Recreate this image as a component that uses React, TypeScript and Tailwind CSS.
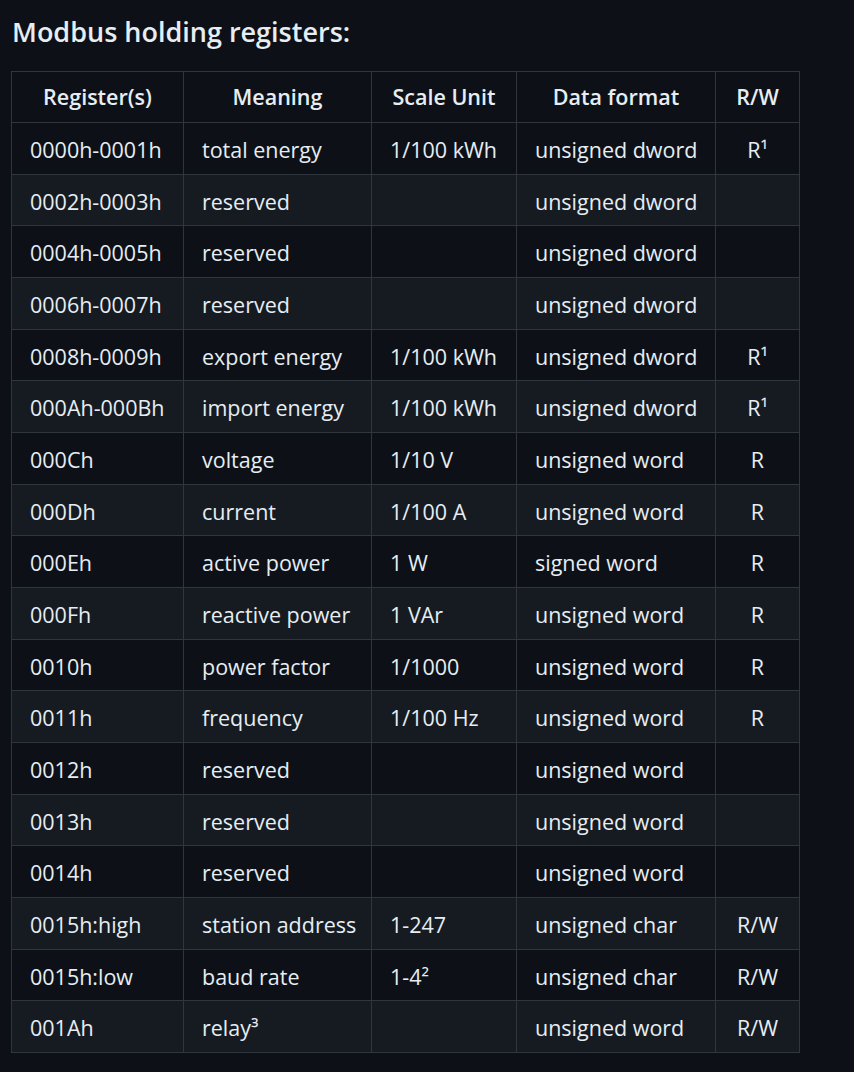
const rows: [string, string, string, string, string][] = [
  ['0000h-0001h', 'total energy', '1/100 kWh', 'unsigned dword', 'R¹'],
  ['0002h-0003h', 'reserved', '', 'unsigned dword', ''],
  ['0004h-0005h', 'reserved', '', 'unsigned dword', ''],
  ['0006h-0007h', 'reserved', '', 'unsigned dword', ''],
  ['0008h-0009h', 'export energy', '1/100 kWh', 'unsigned dword', 'R¹'],
  ['000Ah-000Bh', 'import energy', '1/100 kWh', 'unsigned dword', 'R¹'],
  ['000Ch', 'voltage', '1/10 V', 'unsigned word', 'R'],
  ['000Dh', 'current', '1/100 A', 'unsigned word', 'R'],
  ['000Eh', 'active power', '1 W', 'signed word', 'R'],
  ['000Fh', 'reactive power', '1 VAr', 'unsigned word', 'R'],
  ['0010h', 'power factor', '1/1000', 'unsigned word', 'R'],
  ['0011h', 'frequency', '1/100 Hz', 'unsigned word', 'R'],
  ['0012h', 'reserved', '', 'unsigned word', ''],
  ['0013h', 'reserved', '', 'unsigned word', ''],
  ['0014h', 'reserved', '', 'unsigned word', ''],
  ['0015h:high', 'station address', '1-247', 'unsigned char', 'R/W'],
  ['0015h:low', 'baud rate', '1-4²', 'unsigned char', 'R/W'],
  ['001Ah', 'relay³', '', 'unsigned word', 'R/W'],
]

const headers = ['Register(s)', 'Meaning', 'Scale Unit', 'Data format', 'R/W']
const widths = ['w-[172px]', 'w-[188px]', 'w-[145px]', 'w-[199px]', 'w-[84px]']

export default function App() {
  return (
    <div
      className="min-h-[1072px] bg-[#0d1117] px-[11px] pt-[14px] text-[#e6edf3]"
      style={{ fontFamily: '"Open Sans", "Noto Sans", sans-serif' }}
    >
      <h3 className="mb-[22px] pl-[1px] text-[27px] font-semibold leading-[35px]">Modbus holding registers:</h3>
      <table className="w-[788px] table-fixed border-collapse text-[21.5px]">
        <thead>
          <tr>
            {headers.map((h, i) => (
              <th
                key={h}
                className={`${widths[i]} border border-[#30363d] px-[18px] py-[8px] text-center font-semibold leading-[34px]`}
              >
                {h}
              </th>
            ))}
          </tr>
        </thead>
        <tbody>
          {rows.map((r, ri) => (
            <tr key={ri} className={ri % 2 === 1 ? 'bg-[#161b22]' : 'bg-[#0d1117]'}>
              {r.map((c, ci) => (
                <td
                  key={ci}
                  className={`border border-[#30363d] px-[18px] pt-[10px] pb-[6px] leading-[34.67px] whitespace-nowrap ${ci === 4 ? 'text-center' : 'text-left'}`}
                >
                  {c}
                </td>
              ))}
            </tr>
          ))}
        </tbody>
      </table>
    </div>
  )
}
